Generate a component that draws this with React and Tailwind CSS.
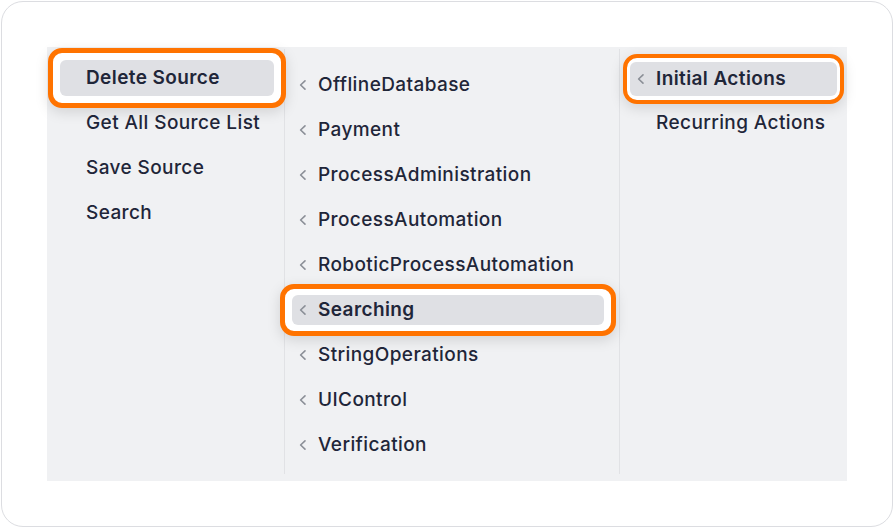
import React from 'react'

const FONT = { fontFamily: 'Inter, "Noto Sans", sans-serif' }

const SOURCE_ACTIONS = ['Delete Source', 'Get All Source List', 'Save Source', 'Search']
const CATEGORIES = [
  'OfflineDatabase',
  'Payment',
  'ProcessAdministration',
  'ProcessAutomation',
  'RoboticProcessAutomation',
  'Searching',
  'StringOperations',
  'UIControl',
  'Verification',
]
const ACTION_GROUPS = ['Initial Actions', 'Recurring Actions']

function Chevron({ hidden }) {
  return (
    <svg width="10" height="12" viewBox="0 0 10 12" className={`ml-[6px] shrink-0 ${hidden ? 'invisible' : ''}`}>
      <path d="M7 1.8 L2.6 6 L7 10.2" fill="none" stroke="#8b8f97" strokeWidth="1.6" strokeLinecap="round" strokeLinejoin="round" />
    </svg>
  )
}

function Item({ label, chevron, active, height, ring }) {
  const row = (
    <div
      className={`relative flex items-center rounded-md ${active ? 'bg-[#dfe0e4] font-semibold' : 'font-medium'}`}
      style={{ height }}
    >
      <Chevron hidden={!chevron} />
      <span className="ml-[10px] text-[19px] tracking-[0.4px] text-[#1f2639] whitespace-nowrap">{label}</span>
    </div>
  )
  if (!ring) return row
  return (
    <div className="relative">
      <div className={`absolute ${ring} rounded-[14px] border-[#ff7300] bg-white shadow-[0_4px_14px_rgba(0,0,0,0.13)]`} />
      {row}
    </div>
  )
}

export default function App() {
  return (
    <div className="w-[894px] h-[528px] bg-white p-[1px]" style={FONT}>
      <div className="h-[526px] w-[892px] rounded-[22px] border border-[#dcdde1] p-[45px]">
        <div className="flex w-[800px] h-[434px] bg-[#f0f1f3] pt-[2px] pb-[7px]">
          {/* Source actions */}
          <div className="w-[238px] border-r border-[#e1e2e5] pl-[13px] pr-[10px] pt-[11px] flex flex-col gap-[9px]">
            {SOURCE_ACTIONS.map((a, i) => (
              <Item
                key={a}
                label={a}
                active={i === 0}
                height={36}
                ring={i === 0 ? '-inset-[12px] border-[5px]' : null}
              />
            ))}
          </div>

          {/* Categories */}
          <div className="w-[335px] border-r border-[#e1e2e5] pl-[7px] pr-[15px] pt-[21px] flex flex-col gap-[15px]">
            {CATEGORIES.map(c => (
              <Item
                key={c}
                label={c}
                chevron
                active={c === 'Searching'}
                height={30}
                ring={c === 'Searching' ? '-inset-x-[12px] -inset-y-[11px] border-[5px]' : null}
              />
            ))}
          </div>

          {/* Action groups */}
          <div className="flex-1 px-[10px] pt-[13px] flex flex-col gap-[10px]">
            {ACTION_GROUPS.map((g, i) => (
              <Item
                key={g}
                label={g}
                chevron={i === 0}
                active={i === 0}
                height={34}
                ring={i === 0 ? '-inset-x-[7px] -inset-y-[8px] border-4' : null}
              />
            ))}
          </div>
        </div>
      </div>
    </div>
  )
}
